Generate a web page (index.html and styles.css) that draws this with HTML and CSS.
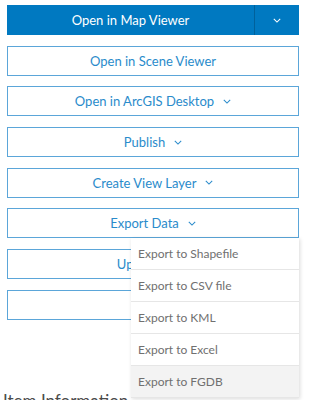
FILE: index.html
```html
<!DOCTYPE html>
<html lang="en">
<head>
  <meta charset="UTF-8">
  <meta name="viewport" content="width=device-width, initial-scale=1.0">
  <link rel="stylesheet" href="styles.css">
  <title>Item Actions</title>
</head>
<body>

<div class="actions">
  <div class="split">
    <button class="btn primary main">Open in Map Viewer</button>
    <button class="btn primary toggle">
      <svg class="chev" viewBox="0 0 10 6"><path d="M1 1l4 4 4-4"/></svg>
    </button>
  </div>

  <button class="btn">Open in Scene Viewer</button>
  <button class="btn">Open in ArcGIS Desktop
    <svg class="chev" viewBox="0 0 10 6"><path d="M1 1l4 4 4-4"/></svg>
  </button>
  <button class="btn">Publish
    <svg class="chev" viewBox="0 0 10 6"><path d="M1 1l4 4 4-4"/></svg>
  </button>
  <button class="btn">Create View Layer
    <svg class="chev" viewBox="0 0 10 6"><path d="M1 1l4 4 4-4"/></svg>
  </button>

  <div class="dropdown">
    <button class="btn">Export Data
      <svg class="chev" viewBox="0 0 10 6"><path d="M1 1l4 4 4-4"/></svg>
    </button>
    <ul class="menu">
      <li>Export to Shapefile</li>
      <li>Export to CSV file</li>
      <li>Export to KML</li>
      <li>Export to Excel</li>
      <li class="hover">Export to FGDB</li>
    </ul>
  </div>

  <button class="btn">Update Data</button>
  <button class="btn">Delete</button>
</div>

<h2 class="section-title">Item Information</h2>

</body>
</html>
```

FILE: styles.css
```css
body {
  margin: 0;
  padding: 5px 11px 0 7px;
  font-family: Lato, 'Open Sans', sans-serif;
  background-color: #fff;
  overflow: hidden;
}

.actions {
  display: flex;
  flex-direction: column;
  gap: 10.7px;
}

.btn {
  display: flex;
  align-items: center;
  justify-content: center;
  gap: 9px;
  width: 100%;
  height: 30px;
  margin: 0;
  padding: 0;
  font-family: inherit;
  font-size: 13px;
  color: #2a8bcb;
  background-color: #fff;
  border: 1px solid #5ba6d9;
  cursor: pointer;
}

.chev {
  width: 8px;
  height: 5px;
  fill: none;
  stroke: currentColor;
  stroke-width: 1.3;
}

.split {
  display: flex;
  height: 30px;
}

.btn.primary {
  color: #fff;
  background-color: #0079c1;
  border: none;
  height: 30px;
}

.btn.main {
  flex: 1;
}

.btn.toggle {
  width: 45px;
  border-left: 1px solid #00619b;
}

.dropdown {
  position: relative;
}

.menu {
  position: absolute;
  top: 30px;
  right: 0;
  width: 168px;
  margin: 0;
  padding: 0;
  list-style: none;
  background-color: #fff;
  box-shadow: 1px 1px 4px rgba(0, 0, 0, 0.15);
  z-index: 2;
}

.menu li {
  height: 31px;
  line-height: 31px;
  padding-left: 7px;
  font-size: 12px;
  color: #707070;
  border-bottom: 1px solid #e6e6e6;
}

.menu li.hover {
  background-color: #f3f3f3;
}

.section-title {
  margin: 70px 0 0 -4px;
  font-size: 17px;
  font-weight: normal;
  color: #4c4c4c;
}
```
